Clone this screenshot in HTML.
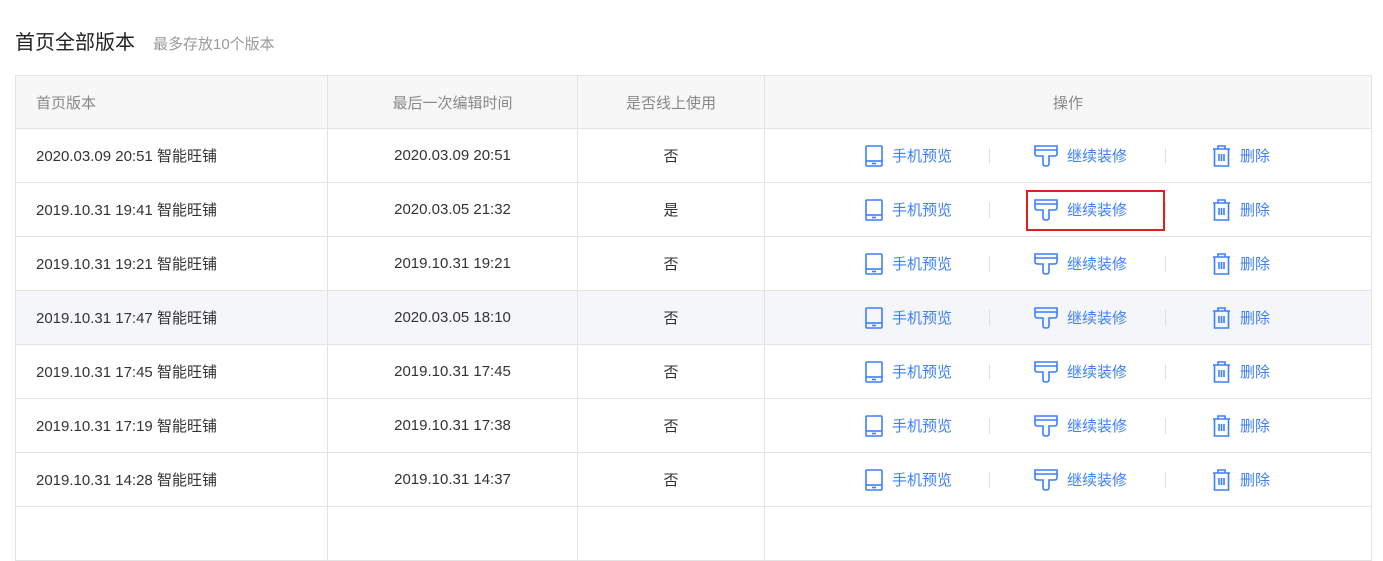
<!DOCTYPE html>
<html><head><meta charset="utf-8"><style>
*{margin:0;padding:0;box-sizing:border-box}
body{width:1383px;height:519px;overflow:hidden;background:#fff;font-family:"Liberation Sans","Noto Sans CJK SC",sans-serif;position:relative}
.t{position:absolute;left:15px;top:20px;font-size:20px;color:#222;line-height:46px}
.t span{font-size:15px;color:#999;margin-left:18px}
.tbl{position:absolute;left:15px;top:75px;width:1357px;border-left:1px solid #e3e3e3;border-right:1px solid #e3e3e3;border-top:1px solid #e3e3e3}
.r{height:54px;border-bottom:1px solid #e3e3e3;position:relative;font-size:15px;color:#333}
.r.h{height:53px;background:#f7f7f7;color:#888}
.r.hv{background:#f5f6fa}
.c{position:absolute;top:0;height:100%;display:flex;align-items:center;border-right:1px solid #e3e3e3}
.c1{left:0;width:312px;padding-left:20px}
.c2{left:312px;width:250px;justify-content:center}
.c3{left:562px;width:187px;justify-content:center}
.c4{left:749px;right:0;border-right:none;justify-content:center}
.a{position:absolute;top:0;height:100%;display:flex;align-items:center;color:#3d7fff;font-size:15px}
.a svg{margin-right:9px}
.sep{position:absolute;top:19px;width:1px;height:16px;background:#e0e0e0}
.box{position:absolute;left:1026px;top:190px;width:139px;height:41px;border:2px solid #e02020}
</style></head><body>
<div class="t">首页全部版本<span>最多存放10个版本</span></div>
<div class="tbl">
<div class="r h"><div class="c c1">首页版本</div><div class="c c2">最后一次编辑时间</div><div class="c c3">是否线上使用</div><div class="c c4">操作</div></div>
</div>
<div class="box"></div>
<script>
var d=[["2020.03.09 20:51 智能旺铺","2020.03.09 20:51","否"],["2019.10.31 19:41 智能旺铺","2020.03.05 21:32","是"],["2019.10.31 19:21 智能旺铺","2019.10.31 19:21","否"],["2019.10.31 17:47 智能旺铺","2020.03.05 18:10","否"],["2019.10.31 17:45 智能旺铺","2019.10.31 17:45","否"],["2019.10.31 17:19 智能旺铺","2019.10.31 17:38","否"],["2019.10.31 14:28 智能旺铺","2019.10.31 14:37","否"],["","",""]];
var ph='<svg width="18" height="22" viewBox="0 0 18 22" fill="none" stroke="#3d7fff" stroke-width="1.6"><rect x="1" y="1" width="16" height="20" rx="1"/><line x1="1" y1="16" x2="17" y2="16"/><line x1="7" y1="18.5" x2="11" y2="18.5"/></svg>';
var br='<svg width="24" height="22" viewBox="0 0 24 22" fill="none" stroke="#3d7fff" stroke-width="1.6"><path d="M1 1H23V5H1Z"/><path d="M1 5V9Q1 11 4 11H9V19Q9 21 12 21Q15 21 15 19V11H20Q23 11 23 9V5"/></svg>';
var tr='<svg width="19" height="22" viewBox="0 0 19 22" fill="none" stroke="#3d7fff" stroke-width="1.6"><path d="M1 4H18"/><path d="M6 4V1H13V4"/><path d="M2.5 4V21H16.5V4"/><path d="M7 9V16M9.5 9V16M12 9V16"/></svg>';
var h='',tb=document.querySelector('.tbl');
d.forEach(function(x,i){
 h+='<div class="r'+(i==3?' hv':'')+'"><div class="c c1">'+x[0]+'</div><div class="c c2">'+x[1]+'</div><div class="c c3">'+x[2]+'</div><div class="c c4"></div>'+(x[0]?'<div class="a" style="left:849px">'+ph+'手机预览</div><div class="sep" style="left:973px"></div><div class="a" style="left:1018px">'+br+'继续装修</div><div class="sep" style="left:1149px"></div><div class="a" style="left:1196px">'+tr+'删除</div>':'')+'</div>';
});
tb.insertAdjacentHTML('beforeend',h);
</script>
</body></html>
